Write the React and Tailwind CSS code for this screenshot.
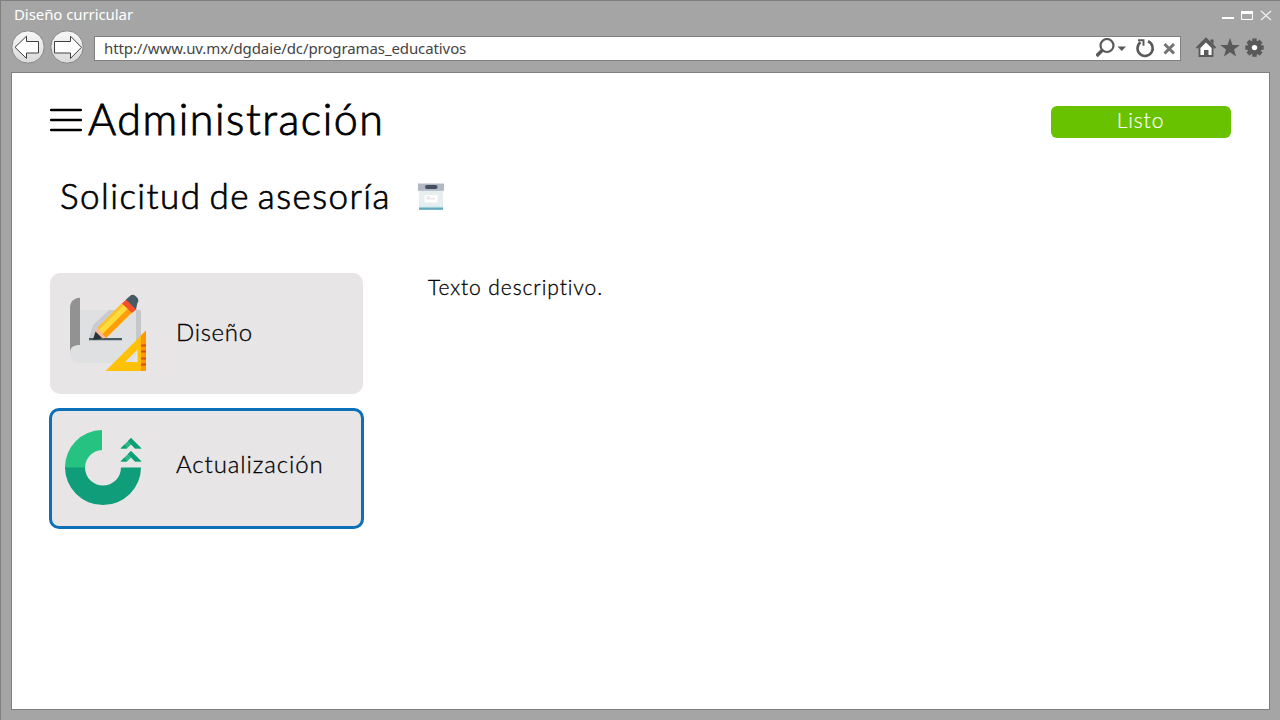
const chromeFont = "font-['Noto_Sans','Open_Sans',sans-serif]";

function NavButton({ forward }) {
  return (
    <svg className="size-[34px] shrink-0" viewBox="0 0 34 34">
      <defs>
        <linearGradient id="disc" x1="0" y1="0" x2="0" y2="1">
          <stop offset="0" stopColor="#f8f8f8" />
          <stop offset="1" stopColor="#d9d9d9" />
        </linearGradient>
      </defs>
      <circle cx="17" cy="17" r="16.2" fill="url(#disc)" stroke="#858585" />
      <path
        d={
          forward
            ? "M31.500 17.300 20.500 6.200V11.500H4.500V23H20.500V28.400Z"
            : "M4 17.300 15.500 6.200V11.500H27.500V23H15.500V28.400Z"
        }
        fill="#fff"
        stroke="#404040"
      />
    </svg>
  );
}

function WindowControls() {
  return (
    <svg className="h-[14px] w-[52px]" viewBox="0 0 52 14" fill="none">
      <path d="M1 10h12" stroke="#fff" strokeWidth="2" />
      <path d="M20.5 3.5h11v8h-11z" stroke="#fff" />
      <path d="M20 4.5h12" stroke="#fff" strokeWidth="3" />
      <path d="m40 3 10 9M50 3l-10 9" stroke="#f2f2f2" strokeWidth="1.1" />
    </svg>
  );
}

function AddressIcons() {
  return (
    <svg className="h-[22px] w-[84px]" viewBox="0 0 84 22" fill="none" stroke="#595959">
      <circle cx="11" cy="7.500" r="6.500" strokeWidth="2.200" />
      <path d="m6.500 12-6 6" strokeWidth="3.600" />
      <path d="M21.500 8.500h8.500l-4.250 4.500Z" fill="#595959" stroke="none" />
      <path d="M52 3.300A7.600 7.600 0 1 1 44.500 4.300" strokeWidth="2.600" />
      <path d="M42 2.300h5.500v5.500" strokeWidth="1.900" />
      <path d="m68.500 6 9.500 9.500M78 6l-9.500 9.500" strokeWidth="3" stroke="#737373" />
    </svg>
  );
}

function ToolIcons() {
  const teeth = [0, 45, 90, 135, 180, 225, 270, 315];
  return (
    <svg className="h-[22px] w-[70px]" viewBox="0 0 70 22">
      <path d="M3.500 10.500 10 4l6.500 6.500v8.500h-13z" fill="#fff" stroke="#595959" strokeWidth="1.8" />
      <path d="M.6 11 10 1.600 19.400 11" fill="none" stroke="#595959" strokeWidth="2" />
      <path d="M14.500 2.500h3v5l-3-3zM8 13h4.500V19H8z" fill="#595959" />
      <path
        d="m34 1 2.500 6.900 7.300.1-5.800 4.500 2.100 7-6.100-4.200-6.100 4.200 2.100-7-5.800-4.500 7.300-.1z"
        fill="#595959"
      />
      <g transform="translate(58.500 10.600)" fill="#595959">
        {teeth.map((a) => (
          <path key={a} d="M-2.200-9.200h4.400V-4h-4.400z" transform={`rotate(${a})`} />
        ))}
        <circle r="7.200" />
        <circle r="2.700" fill="#fff" />
      </g>
    </svg>
  );
}

function BoxIcon() {
  return (
    <svg className="h-[27px] w-[26px]" viewBox="0 0 26 27">
      <path d="M1 7h24v20H1z" fill="#e6eef0" />
      <path d="M0 .5h26v7.300H0z" fill="#b2b8c4" />
      <rect x="7" y="2" width="12.500" height="4" rx="2" fill="#454d61" />
      <path d="M6.500 12h13v7.500h-13z" fill="#fff" />
      <path d="M8.500 14h3.500M8.500 15.800h8.500" stroke="#d9cfd5" strokeWidth=".8" />
      <path d="M1 22.500h24v2H1z" fill="#d5edf1" />
      <path d="M1 24.500h24v2.300H1z" fill="#63a8bd" />
    </svg>
  );
}

function DesignIcon() {
  return (
    <svg className="mb-px h-[78px] w-[78px]" viewBox="0 0 78 78">
      <path d="M10 16h56v43c0 6-4 10-10 10H10C4 69 0 65 0 59s4-8 10-8z" fill="#dfe0e2" />
      <path d="M66 16h3a2 2 0 0 1 2 2v30h-5z" fill="#c5c7cb" />
      <path d="M10 3.800C4 3.800 0 8 0 14v45c0-6 4-8 10-8z" fill="#929292" />
      <path d="M46 16H39L23 31l-4 13h6z" fill="#c9cbcf" />
      <path d="M19 45.200h33" stroke="#455a64" strokeWidth="2.200" />
      <path d="M27 34 52 9l10 10-26 25z" fill="#fdc02f" />
      <path d="m29 36 26-26 4 4-26 26z" fill="#ffdc3c" />
      <path d="m32.500 40 26-26L62 18 36 44z" fill="#ff9d0a" />
      <path d="m27 34 9 10-12 1z" fill="#ffb599" />
      <path d="m25.500 37.500 7 7-9.500 1.200z" fill="#263238" />
      <path d="m52 9.500 4.500-4.200 10 10L62 19z" fill="#f4512c" />
      <path d="m56 5.500 4.500-4c1.500-1.200 3.500-.9 5 .6l1.500 1.500c1.700 1.700 1.800 4 .4 5.400L66 15.500z" fill="#455a64" />
      <path fillRule="evenodd" d="M76 36.500V77H35.500zM67.500 55.500 55 68h12.500z" fill="#ffc107" />
      <path d="m71 41.500 5-5V77h-5z" fill="#ff9800" />
      <path d="M71 51.500h5M71 57.500h5M71 64.500h5M71 70.500h5" stroke="#dc4b14" strokeWidth="2" />
    </svg>
  );
}

function UpdateIcon() {
  return (
    <svg className="mb-[2px] h-[76px] w-[77px]" viewBox="0 0 77 76">
      <path d="M0 38A37.500 37.500 0 0 1 37 0v20A18 18 0 0 0 20 38z" fill="#25c281" />
      <path d="M0 37.500h20a18 18 0 0 0 36 0h20a38 37.500 0 0 1-76 0z" fill="#109d79" />
      <path d="m66 8 10.500 10.500H70L66 14.500l-4 4h-6.500zM66 21l10.500 10.500H70L66 27.500l-4 4h-6.500z" fill="#25bb82" />
      <path d="m66 8 10.500 10.500H70L63 11zM66 21l10.500 10.500H70L63 24zM55.500 18.500l4-4 2.500 4zM55.500 31.500l4-4 2.500 4z" fill="#109d79" />
    </svg>
  );
}

export default function App() {
  return (
    <div className="flex h-[720px] w-[1280px] flex-col overflow-hidden border-l border-t border-[#7f7f7f] bg-[#a5a5a5] pr-[10px] pb-[10px] pl-[10px] font-['Lato',sans-serif] font-light text-black">
      <div className={`flex h-[29px] shrink-0 items-center justify-between pl-[3px] ${chromeFont} font-normal`}>
        <span className="pb-[3px] text-[15px] leading-5 tracking-[-0.08px] text-white">Diseño curricular</span>
        <div className="-mr-[3px] pb-px"><WindowControls /></div>
      </div>
      <div className={`flex h-[42px] shrink-0 items-start ${chromeFont} font-normal`}>
        <div className="flex gap-[5px]">
          <NavButton />
          <NavButton forward />
        </div>
        <div className="mt-[6px] ml-[10px] flex h-[25px] w-[1087px] items-center justify-between border border-[#7f7f7f] bg-white pl-[9px]">
          <span className="pb-[2px] text-[15px] leading-5 tracking-[-0.1px] text-[#444]">http://www.uv.mx/dgdaie/dc/programas_educativos</span>
          <AddressIcons />
        </div>
        <div className="mt-[7px] ml-[15px]"><ToolIcons /></div>
      </div>
      <main className="flex w-[1259px] grow flex-col border border-[#7f7f7f] bg-white pr-[38px] pl-[38px]">
        <header className="mt-[26px] flex h-[42px] shrink-0 items-center">
          <svg className="h-[24px] w-[32px] shrink-0" viewBox="0 0 32 24">
            <path d="M1.200 2h29.600M1.200 12h29.600M1.200 22h29.600" stroke="#000" strokeWidth="2.500" strokeLinecap="round" />
          </svg>
          <h1 className="ml-[6px] pb-[2px] text-[43px] leading-[42px] tracking-[1.55px] whitespace-nowrap [-webkit-text-stroke:0.9px_black]">Administración</h1>
          <button className="mt-1 ml-auto flex h-8 w-[180px] items-center justify-center rounded-[6px] bg-[#69c200] pr-px pb-1 text-[21px] leading-7 tracking-[0.9px] text-white [-webkit-text-stroke:0.2px_white]">
            Listo
          </button>
        </header>
        <div className="mt-[34px] ml-[10px] flex h-[42px] shrink-0 items-center">
          <h2 className="w-[358px] pb-[2px] text-[35px] leading-[42px] tracking-[1.45px] whitespace-nowrap [word-spacing:-3px] [-webkit-text-stroke:0.7px_black]">Solicitud de asesoría</h2>
          <BoxIcon />
        </div>
        <div className="mt-[56px] flex items-start">
          <nav className="flex w-[313px] flex-col gap-[15px] text-[24px] leading-8 [-webkit-text-stroke:0.3px_black]">
            <button className="flex h-[121px] items-center rounded-[10px] bg-[#e7e5e6] pl-[20px] text-left">
              <DesignIcon />
              <span className="ml-[28px] pb-1 tracking-[0.7px]">Diseño</span>
            </button>
            <button className="flex h-[119px] items-center rounded-[9px] bg-[#e7e5e6] pl-[15px] text-left outline-3 -outline-offset-2 outline-[#0b70b8]">
              <UpdateIcon />
              <span className="ml-[34px] pb-[9px] tracking-[0.9px]">Actualización</span>
            </button>
          </nav>
          <p className="ml-[65px] text-[21px] leading-7 tracking-[0.92px] [-webkit-text-stroke:0.3px_black]">Texto descriptivo.</p>
        </div>
      </main>
    </div>
  );
}
